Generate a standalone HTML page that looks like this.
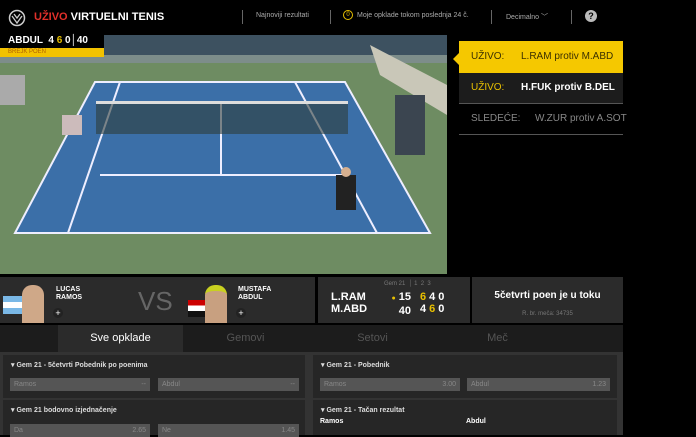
<!DOCTYPE html>
<html><head><meta charset="utf-8"><style>
*{margin:0;padding:0;box-sizing:border-box}
body{width:696px;height:435px;background:#000;overflow:hidden;font-family:"Liberation Sans",sans-serif;color:#fff;position:relative}
.a{position:absolute;white-space:nowrap}
.sep{position:absolute;top:10px;width:1px;height:14px;background:#666}
.box{background:#2b2b2b}
.mk{position:absolute;background:#262626}
.mk .t{font-size:7px;color:#ddd;padding:6px 8px;font-weight:bold}
.btn{position:absolute;height:13px;background:#555;font-size:7px;color:#888;padding:3px 4px}
.btn span{float:right}
</style></head><body>
<svg class="a" style="left:8px;top:9px" width="18" height="18" viewBox="0 0 18 18"><circle cx="9" cy="9" r="7.5" fill="none" stroke="#ccc" stroke-width="1.5"/><path d="M4 7 L9 14 L14 7 M6 5 L9 9 L12 5" fill="none" stroke="#ccc" stroke-width="1.3"/></svg>
<div class="a" style="left:34px;top:11px;font-size:11px;font-weight:bold"><span style="color:#e0302a">UŽIVO</span> VIRTUELNI TENIS</div>
<div class="sep" style="left:242px"></div>
<div class="a" style="left:256px;top:12px;font-size:7px;color:#aaa">Najnoviji rezultati</div>
<div class="sep" style="left:330px"></div>
<div class="a" style="left:343px;top:10px;width:10px;height:10px;border:1px solid #e8c000;border-radius:50%;font-size:6px;color:#e8c000;text-align:center;line-height:8px">0</div>
<div class="a" style="left:357px;top:12px;font-size:7px;color:#aaa">Moje opklade tokom poslednja 24 č.</div>
<div class="sep" style="left:491px"></div>
<div class="a" style="left:506px;top:12px;font-size:7px;color:#aaa">Decimalno ﹀</div>
<div class="sep" style="left:571px"></div>
<div class="a" style="left:585px;top:10px;width:12px;height:12px;border-radius:50%;background:#bbb;color:#000;font-size:9px;font-weight:bold;text-align:center;line-height:12px">?</div>
<svg class="a" style="left:0;top:35px" width="447" height="239" viewBox="0 0 447 239">
<rect width="447" height="239" fill="#6e8c62"/>
<rect width="447" height="24" fill="#3d5160"/>
<rect y="20" width="447" height="8" fill="#7d8d8a"/>
<polygon points="370,10 447,50 447,80 380,40" fill="#c9c7b8"/>
<polygon points="95,47 345,47 430,198 15,198" fill="#3b6fa8"/>
<g stroke="#eef" stroke-width="2" fill="none">
<polygon points="95,47 345,47 430,198 15,198"/>
<line x1="120" y1="47" x2="68" y2="198"/><line x1="295" y1="47" x2="377" y2="198"/>
<line x1="100" y1="140" x2="343" y2="140"/><line x1="221" y1="68" x2="221" y2="140"/>
</g>
<rect x="96" y="66" width="252" height="3" fill="#ddd"/>
<rect x="96" y="69" width="252" height="30" fill="#2f3e3a" opacity=".6"/>
<rect x="336" y="140" width="20" height="35" fill="#222"/><circle cx="346" cy="137" r="5" fill="#d6b090"/>
<rect x="395" y="60" width="30" height="60" fill="#3b4550"/>
<rect x="0" y="40" width="25" height="30" fill="#aaa"/>
<rect x="62" y="80" width="20" height="20" fill="#cbb"/>
</svg>
<div class="a" style="left:0;top:35px;width:104px;height:13px;background:#000;font-size:10px;font-weight:bold;padding-left:8px;line-height:12px">ABDUL &nbsp;4 <span style="color:#e8c000">6</span> 0│40</div>
<div class="a" style="left:0;top:48px;width:104px;height:9px;background:#f2c200;font-size:6px;color:#b06000;padding-left:8px;line-height:9px">BREJK POEN</div>
<div class="a" style="left:459px;top:41px;width:164px;height:32px;background:#f5c800;color:#3a3000;font-size:10px;line-height:32px;padding-left:12px">UŽIVO:<span style="position:absolute;left:62px">L.RAM protiv M.ABD</span></div>
<div class="a" style="left:453px;top:53px;width:0;height:0;border:6px solid transparent;border-right-color:#f5c800;border-left:0"></div>
<div class="a" style="left:459px;top:73px;width:164px;height:30px;background:#1c1c1c;font-size:10px;line-height:30px;padding-left:12px;font-weight:bold"><span style="color:#e8c000;font-weight:normal">UŽIVO:</span><span style="position:absolute;left:62px">H.FUK protiv B.DEL</span></div>
<div class="a" style="left:459px;top:103px;width:164px;height:1px;background:#555"></div>
<div class="a" style="left:459px;top:104px;width:164px;height:30px;font-size:10px;line-height:30px;padding-left:12px;color:#888">SLEDEĆE:<span style="position:absolute;left:76px">W.ZUR protiv A.SOT</span></div>
<div class="a" style="left:459px;top:134px;width:164px;height:1px;background:#555"></div>
<div class="a box" style="left:0;top:277px;width:315px;height:46px"></div>
<div class="a" style="left:3px;top:296px;width:24px;height:18px;background:linear-gradient(#7ab8e6 33%,#fff 33%,#fff 66%,#7ab8e6 66%)"></div>
<div class="a" style="left:22px;top:285px;width:22px;height:38px;background:#cfa888;border-radius:10px 10px 0 0"></div>
<div class="a" style="left:53px;top:308px;width:10px;height:10px;border-radius:50%;background:#222;font-size:9px;text-align:center;line-height:10px">+</div>
<div class="a" style="left:56px;top:286px;font-size:7px;font-weight:bold;line-height:8px">LUCAS<br>RAMOS</div>
<div class="a" style="left:138px;top:286px;font-size:26px;color:#666">VS</div>
<div class="a" style="left:188px;top:300px;width:26px;height:17px;background:linear-gradient(#c00 33%,#fff 33%,#fff 66%,#111 66%)"></div>
<div class="a" style="left:205px;top:285px;width:22px;height:38px;background:#c8a080;border-radius:10px 10px 0 0;border-top:6px solid #c8d020"></div>
<div class="a" style="left:236px;top:308px;width:10px;height:10px;border-radius:50%;background:#222;font-size:9px;text-align:center;line-height:10px">+</div>
<div class="a" style="left:238px;top:286px;font-size:7px;font-weight:bold;line-height:8px">MUSTAFA<br>ABDUL</div>
<div class="a box" style="left:318px;top:277px;width:152px;height:46px"></div>
<div class="a" style="left:331px;top:291px;font-size:11px;font-weight:bold;line-height:12px">L.RAM<br>M.ABD</div>
<div class="a" style="left:384px;top:281px;font-size:6px;color:#777">Gem 21 &nbsp;│ 1 &nbsp;2 &nbsp;3</div>
<div class="a" style="left:386px;top:291px;font-size:11px;font-weight:bold;line-height:12px;text-align:right;width:25px"><span style="color:#e8c000;font-size:7px">●</span> 15<br>40</div>
<div class="a" style="left:420px;top:291px;font-size:11px;font-weight:bold;line-height:12px;letter-spacing:3px"><span style="color:#e8c000">6</span>40<br>4<span style="color:#e8c000">6</span>0</div>
<div class="a box" style="left:472px;top:277px;width:151px;height:46px"></div>
<div class="a" style="left:472px;top:290px;width:151px;text-align:center;font-size:10px;font-weight:bold">5četvrti poen je u toku</div>
<div class="a" style="left:472px;top:311px;width:151px;text-align:center;font-size:6px;color:#777">R. br. meča: 34735</div>
<div class="a" style="left:0;top:325px;width:623px;height:27px;background:#1c1c1c"></div>
<div class="a" style="left:58px;top:325px;width:125px;height:27px;background:#2b2b2b;font-size:11px;line-height:27px;text-align:center">Sve opklade</div>
<div class="a" style="left:183px;top:325px;width:125px;font-size:11px;line-height:27px;text-align:center;color:#555">Gemovi</div>
<div class="a" style="left:310px;top:325px;width:125px;font-size:11px;line-height:27px;text-align:center;color:#555">Setovi</div>
<div class="a" style="left:435px;top:325px;width:125px;font-size:11px;line-height:27px;text-align:center;color:#555">Meč</div>
<div class="a" style="left:0;top:352px;width:623px;height:83px;background:#333"></div>
<div class="mk" style="left:3px;top:355px;width:302px;height:43px"><div class="t">▾ Gem 21 - 5četvrti Pobednik po poenima</div></div>
<div class="btn" style="left:10px;top:378px;width:140px">Ramos<span>--</span></div>
<div class="btn" style="left:158px;top:378px;width:141px">Abdul<span>--</span></div>
<div class="mk" style="left:313px;top:355px;width:304px;height:43px"><div class="t">▾ Gem 21 - Pobednik</div></div>
<div class="btn" style="left:320px;top:378px;width:140px">Ramos<span>3.00</span></div>
<div class="btn" style="left:467px;top:378px;width:143px">Abdul<span>1.23</span></div>
<div class="mk" style="left:3px;top:400px;width:302px;height:35px"><div class="t">▾ Gem 21 bodovno izjednačenje</div></div>
<div class="btn" style="left:10px;top:424px;width:140px">Da<span>2.65</span></div>
<div class="btn" style="left:158px;top:424px;width:141px">Ne<span>1.45</span></div>
<div class="mk" style="left:313px;top:400px;width:304px;height:35px"><div class="t">▾ Gem 21 - Tačan rezultat</div></div>
<div class="a" style="left:320px;top:418px;font-size:7px;font-weight:bold">Ramos</div>
<div class="a" style="left:466px;top:418px;font-size:7px;font-weight:bold">Abdul</div>
</body></html>
